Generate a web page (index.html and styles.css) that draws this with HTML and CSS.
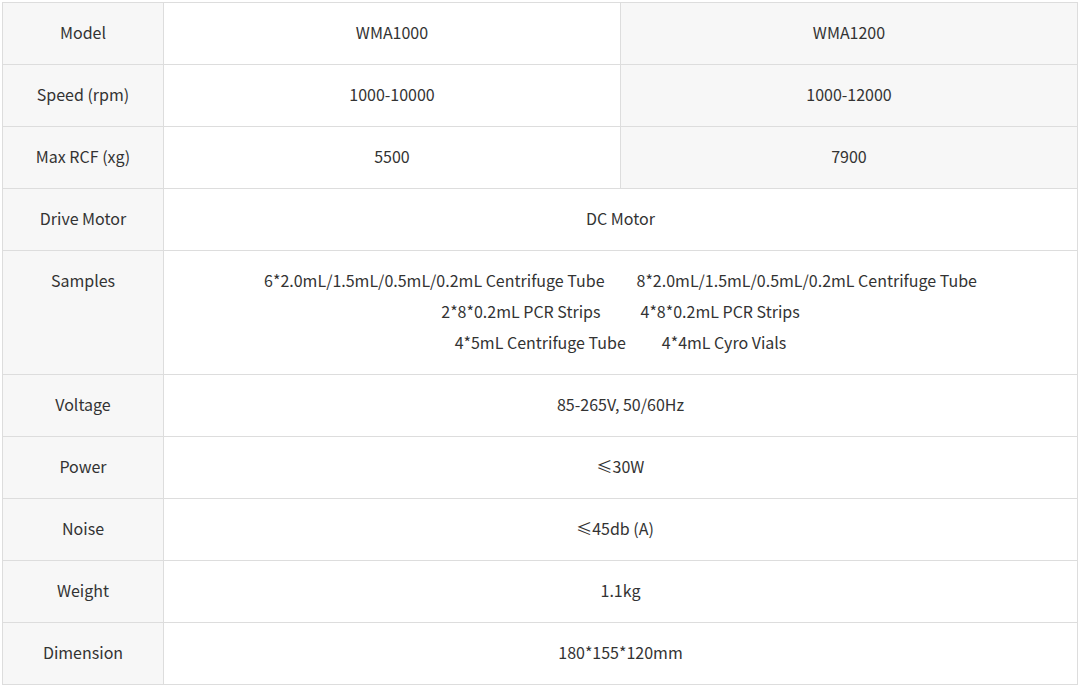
FILE: index.html
```html
<!DOCTYPE html>
<html>
<head>
<meta charset="utf-8">
<link rel="stylesheet" href="styles.css">
</head>
<body>
<table class="spec">
  <colgroup>
    <col class="c-label">
    <col class="c-val">
    <col class="c-val">
  </colgroup>
  <tr><td class="label">Model</td><td>WMA1000</td><td class="alt">WMA1200</td></tr>
  <tr><td class="label">Speed (rpm)</td><td>1000-10000</td><td class="alt">1000-12000</td></tr>
  <tr><td class="label">Max RCF (xg)</td><td>5500</td><td class="alt">7900</td></tr>
  <tr><td class="label">Drive Motor</td><td colspan="2">DC Motor</td></tr>
  <tr class="tall"><td class="label top">Samples</td><td colspan="2" class="multi">
    <div class="line"><span>6*2.0mL/1.5mL/0.5mL/0.2mL Centrifuge Tube</span><span class="g32"></span><span>8*2.0mL/1.5mL/0.5mL/0.2mL Centrifuge Tube</span></div>
    <div class="line"><span>2*8*0.2mL PCR Strips</span><span class="g40"></span><span>4*8*0.2mL PCR Strips</span></div>
    <div class="line"><span>4*5mL Centrifuge Tube</span><span class="g36"></span><span>4*4mL Cyro Vials</span></div>
  </td></tr>
  <tr><td class="label">Voltage</td><td colspan="2">85-265V, 50/60Hz</td></tr>
  <tr><td class="label">Power</td><td colspan="2">≤30W</td></tr>
  <tr><td class="label">Noise</td><td colspan="2" class="shift">≤45db (A)</td></tr>
  <tr><td class="label">Weight</td><td colspan="2">1.1kg</td></tr>
  <tr><td class="label">Dimension</td><td colspan="2">180*155*120mm</td></tr>
</table>
</body>
</html>
```
FILE: styles.css
```css
html, body {
  margin: 0;
  padding: 0;
  background: #fff;
}
body {
  padding: 2px;
  font-family: "Noto Sans CJK SC", "Noto Sans", sans-serif;
  font-size: 16px;
  color: #333;
}
.spec {
  border-collapse: collapse;
  width: 1076px;
  table-layout: fixed;
}
.c-label { width: 161px; }
.spec td {
  border: 1px solid #ddd;
  height: 59px;
  padding: 0 0 2px;
  text-align: center;
  vertical-align: middle;
  line-height: 31px;
}
.spec td.label, .spec td.alt {
  background: #f7f7f7;
}
.spec tr.tall td {
  height: 121px;
}
.spec tr.tall td.top {
  height: auto;
  vertical-align: top;
  padding-top: 14px;
}
.spec td.shift {
  padding-right: 11px;
}
.line {
  display: flex;
  justify-content: center;
}
.g32 { width: 32px; }
.g40 { width: 40px; }
.g36 { width: 36px; }
```
